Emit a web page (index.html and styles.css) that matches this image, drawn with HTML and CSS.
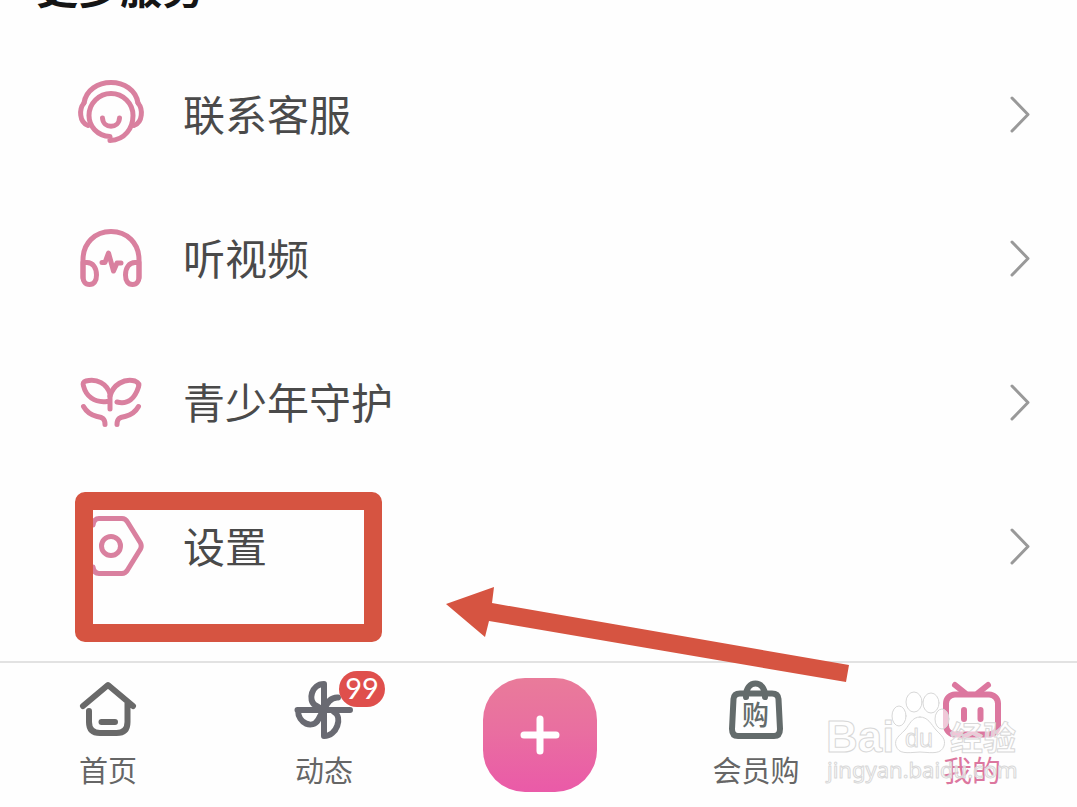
FILE: index.html
```html
<!DOCTYPE html>
<html lang="zh-CN">
<head>
<meta charset="utf-8">
<meta name="viewport" content="width=device-width, initial-scale=1">
<title>我的</title>
<link rel="stylesheet" href="styles.css">
</head>
<body>
<div class="screen">
  <main class="services">
    <h2 class="services-title">更多服务</h2>
    <a class="row" href="#">
      <svg class="row-icon" viewBox="78 82 66 66" aria-hidden="true">
        <path d="M84 103C86 90 98 82.500 111 82.500S136 90 138 103"/>
        <path d="M110 140.500C125 140 133 128 133 115.500A22 22 0 1 0 89 115.500C89 126 97 136 110 136.500V140.500"/>
        <path d="M84 103C79 109 79 122 88 125.500M138 103C143 109 143 122 134 125.500"/>
        <path d="M102.500 118C103 129 119 129 119.500 118"/>
      </svg>
      <span class="row-label">联系客服</span>
      <svg class="chevron" viewBox="0 0 24 40" aria-hidden="true"><path d="M4 3L20 19.500L4 36"/></svg>
    </a>
    <a class="row" href="#">
      <svg class="row-icon" viewBox="78 226 66 66" aria-hidden="true">
        <path d="M83 278V260C83 243 95 231.500 111 231.500S139 243 139 260V278"/>
        <path d="M83 262.500H87C93 262.500 96.500 268 96.500 275C96.500 281 94 284.500 89.500 284.500C85 284.500 83 281 83 277ZM139 262.500H135C129 262.500 125.500 268 125.500 275C125.500 281 128 284.500 132.500 284.500C137 284.500 139 281 139 277Z"/>
        <path d="M102 262.500H105L108.500 253L113.500 271L117 263H121"/>
      </svg>
      <span class="row-label">听视频</span>
      <svg class="chevron" viewBox="0 0 24 40" aria-hidden="true"><path d="M4 3L20 19.500L4 36"/></svg>
    </a>
    <a class="row" href="#">
      <svg class="row-icon" viewBox="78 370 66 66" aria-hidden="true">
        <path d="M110 409V394C107 384 97 378 86 381Q82 382 83.500 386C86 396 94 403 107 401.500"/>
        <path d="M110 396C113 385 124 378 135 381Q140 383 138.500 387C135 398 128 405 117 402"/>
        <path d="M83.500 406.500C86 411 91 415 97 416.500C102 417.500 105 418 105 424.500M138.500 406.500C136 411 131 415 125 416.500C120 417.500 117 418 117 424.500"/>
      </svg>
      <span class="row-label">青少年守护</span>
      <svg class="chevron" viewBox="0 0 24 40" aria-hidden="true"><path d="M4 3L20 19.500L4 36"/></svg>
    </a>
    <a class="row row-marked" href="#">
      <svg class="row-icon" viewBox="78 514 66 66" aria-hidden="true">
        <path d="M93 525Q94 518.500 99 518.500H122Q125.500 518.500 127.500 522L140.500 543Q142 546 140.500 549L127.500 570Q125.500 573.500 122 573.500H99Q94 573.500 93 567"/>
        <circle cx="111" cy="546" r="9.500"/>
      </svg>
      <span class="row-label">设置</span>
      <svg class="chevron" viewBox="0 0 24 40" aria-hidden="true"><path d="M4 3L20 19.500L4 36"/></svg>
      <span class="mark-frame"></span>
    </a>
  </main>

  <nav class="tabs">
    <a class="tab" href="#">
      <svg class="tab-icon" viewBox="78 680 60 60" aria-hidden="true">
        <path d="M83 706L108 685L133 706M89 711V722Q89 733 100 733H116.500Q127.500 733 127.500 722V703M101.500 722H115"/>
      </svg>
      <span>首页</span>
    </a>
    <a class="tab" href="#">
      <span class="tab-figure">
        <svg class="tab-icon fan" viewBox="294 680 60 60" aria-hidden="true">
          <path d="M297.500 710H350M324 684V736M324 684C311 684 308 701 315 705Q318 707 324 710M298 710C298 724 313 729 318 720Q320 716 324 710M324 736C337 736 343 717 334 712M324 710C327 702 331 697 338 697.500"/>
        </svg>
        <span class="badge">99</span>
      </span>
      <span>动态</span>
    </a>
    <button class="publish" type="button" aria-label="发布">
      <svg class="plus" viewBox="0 0 40 40" aria-hidden="true"><path d="M20 4V36M4 20H36"/></svg>
    </button>
    <a class="tab" href="#">
      <svg class="tab-icon bag" viewBox="726 680 60 60" aria-hidden="true">
        <path d="M740 693.500H772Q778 693.500 778.500 699L780 729Q780 736 774 736H738Q732 736 732 729L733.500 699Q734 693.500 740 693.500ZM746 697C745 679 766 679 765 697"/>
        <text x="742" y="725">购</text>
      </svg>
      <span>会员购</span>
    </a>
    <a class="tab tab-active" href="#">
      <svg class="tab-icon tv" viewBox="942 680 60 60" aria-hidden="true">
        <path d="M955 685L965 693M988 685L978 693"/>
        <rect x="946" y="694.500" width="52" height="40" rx="9"/>
        <path d="M964 710V719M980.500 710V719"/>
      </svg>
      <span>我的</span>
    </a>
  </nav>

  <svg class="arrow" viewBox="0 0 404 96" aria-hidden="true"><path d="M0 18L48 1L46 17L403 79L400 96L43 35L39 51Z"/></svg>

  <svg class="watermark" viewBox="820 685 204 105" aria-hidden="true">
    <text class="wm-brand" x="826" y="752">Bai</text>
    <ellipse cx="899" cy="716" rx="7" ry="10"/>
    <ellipse cx="914" cy="702" rx="8" ry="10"/>
    <ellipse cx="931" cy="703" rx="8" ry="10"/>
    <ellipse cx="942" cy="719" rx="7" ry="10"/>
    <path d="M920 717C928 717 931 724 936 730C942 736 946 739 944 746C941 754 934 753 920 752C906 753 899 754 896 746C894 739 899 736 905 730C910 724 912 717 920 717Z"/>
    <text class="wm-du" x="905" y="747">du</text>
    <text class="wm-cn" x="950" y="750">经验</text>
    <text class="wm-url" x="827" y="778">jingyan.baidu.com</text>
  </svg>
</div>
</body>
</html>
```
FILE: styles.css
```css
* {
  box-sizing: border-box;
}

body {
  margin: 0;
  background: #fefefe;
  color: #4a4a4a;
  font-family: "Noto Sans CJK SC", sans-serif;
}

a {
  color: inherit;
  text-decoration: none;
}

svg {
  display: block;
  fill: none;
  overflow: visible;
  stroke-linecap: round;
  stroke-linejoin: round;
}

.screen {
  position: relative;
  min-height: 100vh;
  overflow: hidden;
}

.services {
  padding-bottom: 42px;
}

.services-title {
  margin: -38px 0 33px 36px;
  color: #151515;
  font-size: 42px;
  line-height: 48px;
  font-weight: 700;
}

/* Service list */
.row {
  position: relative;
  display: flex;
  align-items: center;
  gap: 39px;
  height: 144px;
  padding: 0 45px 0 78px;
}

.row-icon {
  width: 66px;
  height: 66px;
  stroke: #d9809f;
  stroke-width: 5;
}

.row-label {
  flex: 1;
  padding-bottom: 4px;
  font-size: 42px;
  line-height: 60px;
}

.chevron {
  width: 24px;
  height: 40px;
  stroke: #999;
  stroke-width: 3;
}

.mark-frame {
  position: absolute;
  top: 17px;
  left: 75px;
  width: 307px;
  height: 150px;
  border: 18px solid #d65441;
  border-radius: 10px;
}

/* Bottom bar */
.tabs {
  display: grid;
  grid-template-columns: repeat(5, 1fr);
  margin-right: -3px;
  border-top: 2px solid #e2e2e2;
  padding-top: 15px;
}

.tab {
  display: flex;
  flex-direction: column;
  align-items: center;
  gap: 11px;
  padding-top: 2px;
  color: #666;
  font-size: 29px;
  line-height: 36px;
}

.tab-icon {
  width: 60px;
  height: 60px;
  stroke: #696969;
  stroke-width: 6;
}

.fan {
  stroke: #696a72;
}

.bag {
  stroke: #636b6b;
}

.bag text {
  fill: #636b6b;
  stroke: none;
  font-size: 27px;
  font-weight: 500;
}

.tv {
  stroke: #dc779f;
}

.tab-active {
  color: #dc779f;
}

.tab-figure {
  position: relative;
}

.badge {
  position: absolute;
  top: -9px;
  left: 45px;
  width: 46px;
  height: 36px;
  border-radius: 18px;
  background: #df4f4c;
  color: #fff;
  font-family: Lato, sans-serif;
  font-size: 29px;
  line-height: 34px;
  text-align: center;
}

.publish {
  display: grid;
  place-items: center;
  justify-self: center;
  width: 114px;
  height: 114px;
  border: 0;
  border-radius: 42px;
  background: linear-gradient(#e97b9a, #e96fa0 45%, #ea5aa8);
}

.plus {
  width: 40px;
  height: 40px;
  stroke: #fff;
  stroke-width: 7;
}

/* Overlays */
.arrow {
  position: absolute;
  top: 586px;
  left: 446px;
  width: 404px;
  height: 96px;
  fill: #d65441;
}

.watermark {
  position: absolute;
  top: 685px;
  left: 820px;
  width: 204px;
  height: 105px;
  fill: rgba(255, 255, 255, 0.6);
  stroke: #d8d8d8;
  stroke-width: 1;
}

.wm-brand {
  font: 700 44px "Liberation Sans", sans-serif;
}

.wm-du {
  font: 25px "Liberation Sans", sans-serif;
}

.wm-cn {
  font-size: 33px;
  font-weight: 700;
}

.wm-url {
  font: 22px "Noto Sans", sans-serif;
}
```
